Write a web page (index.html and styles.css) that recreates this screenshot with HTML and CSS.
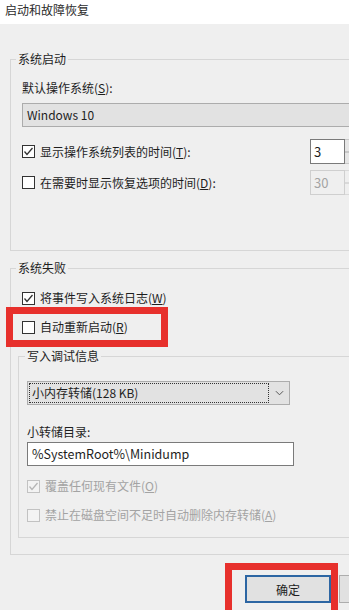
FILE: index.html
```html
<!DOCTYPE html>
<html lang="zh-CN">
<head>
    <meta charset="UTF-8">
    <meta name="viewport" content="width=device-width, initial-scale=1.0">
    <title>启动和故障恢复</title>
    <link rel="stylesheet" href="styles.css">
</head>
<body>

<div class="dialog">
    <div class="titlebar">启动和故障恢复</div>

    <div class="panel">
        <fieldset class="group">
            <legend>系统启动</legend>
            <div class="group-body startup">
                <div class="label">默认操作系统(<u>S</u>):</div>
                <div class="combo">Windows 10</div>

                <div class="row row-first">
                    <label class="check">
                        <span class="box"><svg viewBox="0 0 11 11"><polyline points="1.5,5.5 4,8.5 9.5,2"/></svg></span>
                        <span>显示操作系统列表的时间(<u>T</u>):</span>
                    </label>
                    <div class="spin">
                        <span class="spin-val">3</span>
                        <span class="spin-btns"><i></i><i></i></span>
                    </div>
                </div>
                <div class="row">
                    <label class="check">
                        <span class="box"></span>
                        <span>在需要时显示恢复选项的时间(<u>D</u>):</span>
                    </label>
                    <div class="spin disabled">
                        <span class="spin-val">30</span>
                        <span class="spin-btns"><i></i><i></i></span>
                    </div>
                </div>
            </div>
        </fieldset>

        <fieldset class="group failure">
            <legend>系统失败</legend>
            <div class="group-body">
                <label class="check line first-check">
                    <span class="box"><svg viewBox="0 0 11 11"><polyline points="1.5,5.5 4,8.5 9.5,2"/></svg></span>
                    <span>将事件写入系统日志(<u>W</u>)</span>
                </label>
                <label class="check line restart">
                    <span class="box"></span>
                    <span>自动重新启动(<u>R</u>)</span>
                </label>

                <fieldset class="group sub">
                    <legend>写入调试信息</legend>
                    <div class="group-body debug">
                        <div class="dropdown">
                            <span class="dropdown-val">小内存转储(128 KB)</span>
                            <span class="dropdown-arrow"><svg viewBox="0 0 10 6"><polyline points="1,1 5,5 9,1"/></svg></span>
                        </div>
                        <div class="label dump-label">小转储目录:</div>
                        <div class="textbox">%SystemRoot%\Minidump</div>
                        <label class="check line disabled overwrite">
                            <span class="box"><svg viewBox="0 0 11 11"><polyline points="1.5,5.5 4,8.5 9.5,2"/></svg></span>
                            <span>覆盖任何现有文件(<u>O</u>)</span>
                        </label>
                        <label class="check line disabled keep">
                            <span class="box"></span>
                            <span>禁止在磁盘空间不足时自动删除内存转储(<u>A</u>)</span>
                        </label>
                    </div>
                </fieldset>
            </div>
        </fieldset>

        <div class="buttons">
            <button class="btn btn-default">确定</button>
            <button class="btn" aria-label="取消"></button>
        </div>
    </div>

    <div class="mark mark-restart"></div>
    <div class="mark mark-ok"></div>
</div>

</body>
</html>
```

FILE: styles.css
```css
html, body {
    margin: 0;
    padding: 0;
}
body {
    width: 349px;
    height: 610px;
    overflow: hidden;
    background-color: #efefef;
    font-family: "Noto Sans CJK SC", "Noto Sans", sans-serif;
    font-size: 12px;
    color: #1e1e1e;
}
u {
    text-decoration: underline;
    text-underline-offset: 1px;
}
.dialog {
    position: relative;
    width: 430px;
    height: 610px;
}
.titlebar {
    height: 24px;
    line-height: 20px;
    padding-left: 5px;
    background-color: #fff;
    color: #2b2b2b;
}
.panel {
    padding: 28px 0 0 10px;
}
.group {
    margin: 0;
    padding: 0;
    width: 400px;
    min-width: 0;
    border: 1px solid #d6d6d6;
}
.group legend {
    padding: 0 2px;
    margin-left: 5px;
    line-height: 14px;
    font-size: 12px;
}
.group-body {
    padding-left: 11px;
}
.startup {
    padding-top: 14px;
    padding-bottom: 55px;
}
.label {
    line-height: 16px;
}
.combo {
    margin-top: 7px;
    height: 22px;
    line-height: 22px;
    padding-left: 4px;
    width: 400px;
    background-color: #e2e2e2;
    border: 1px solid #acacac;
}
.row {
    display: flex;
    align-items: center;
    justify-content: space-between;
    width: 339px;
    margin-top: 6px;
}
.row-first {
    margin-top: 12px;
}
.check {
    display: flex;
    align-items: center;
    gap: 5px;
    line-height: 16px;
    white-space: nowrap;
}
.box {
    width: 11px;
    height: 11px;
    border: 1px solid #333;
    background-color: #fff;
    display: flex;
}
.box svg {
    width: 11px;
    height: 11px;
    fill: none;
    stroke: #333;
    stroke-width: 1.3;
}
.check.disabled {
    color: #a3a3a3;
}
.check.disabled .box {
    border-color: #c2c2c2;
    background-color: #f3f3f3;
}
.check.disabled .box svg {
    stroke: #b5b5b5;
}
.spin {
    display: flex;
    height: 25px;
}
.spin-val {
    box-sizing: border-box;
    width: 35px;
    height: 25px;
    line-height: 23px;
    padding-left: 3px;
    border: 1px solid #7a7a7a;
    background-color: #fff;
    font-size: 13px;
}
.spin-btns {
    width: 16px;
    display: flex;
    flex-direction: column;
}
.spin-btns i {
    flex: 1;
    border: 1px solid #c8c8c8;
    border-left: none;
    background-color: #e6e6e6;
}
.spin.disabled .spin-val {
    border-color: #cfcfcf;
    background-color: #efefef;
    color: #a3a3a3;
}
.spin.disabled .spin-btns i {
    border-color: #d9d9d9;
    background-color: #efefef;
}

.failure {
    margin-top: 10px;
}
.failure > .group-body {
    padding-left: 7px;
    padding-bottom: 16px;
}
.line {
    padding-left: 4px;
}
.first-check {
    margin-top: 15px;
}
.restart {
    margin-top: 13px;
}
.sub {
    margin-top: 14px;
    width: 390px;
}
.sub legend {
    margin-left: 6px;
}
.debug {
    padding-left: 8px;
    padding-top: 18px;
    padding-bottom: 14px;
}
.debug .line {
    padding-left: 0;
}
.dropdown {
    box-sizing: border-box;
    width: 263px;
    height: 24px;
    display: flex;
    background-color: #e2e2e2;
    border: 1px solid #acacac;
}
.dropdown-val {
    flex: 1;
    margin: 1px;
    padding-left: 2px;
    line-height: 18px;
    border: 1px dotted #333;
}
.dropdown-arrow {
    width: 19px;
    display: flex;
    align-items: center;
    justify-content: center;
}
.dropdown-arrow svg {
    width: 9px;
    height: 6px;
    fill: none;
    stroke: #555;
    stroke-width: 1.1;
}
.dump-label {
    margin-top: 19px;
}
.textbox {
    box-sizing: border-box;
    margin-top: 2px;
    width: 267px;
    height: 24px;
    line-height: 22px;
    padding-left: 4px;
    background-color: #fff;
    border: 1px solid #7a7a7a;
    font-size: 12.5px;
}
.overwrite {
    margin-top: 12px;
}
.keep {
    margin-top: 13px;
}

.buttons {
    display: flex;
    gap: 8px;
    margin: 20px 0 0 235px;
}
.btn {
    box-sizing: border-box;
    width: 86px;
    height: 28px;
    padding: 0;
    font-family: inherit;
    font-size: 12px;
    color: #1e1e1e;
    background-color: #e1e1e1;
    border: 1px solid #adadad;
}
.btn-default {
    border: 2px solid #2d66a3;
}

.mark {
    position: absolute;
    border: 7px solid #e7302c;
}
.mark-restart {
    left: 6px;
    top: 307px;
    width: 148px;
    height: 26px;
}
.mark-ok {
    left: 225px;
    top: 563px;
    width: 99px;
    height: 50px;
}
```
